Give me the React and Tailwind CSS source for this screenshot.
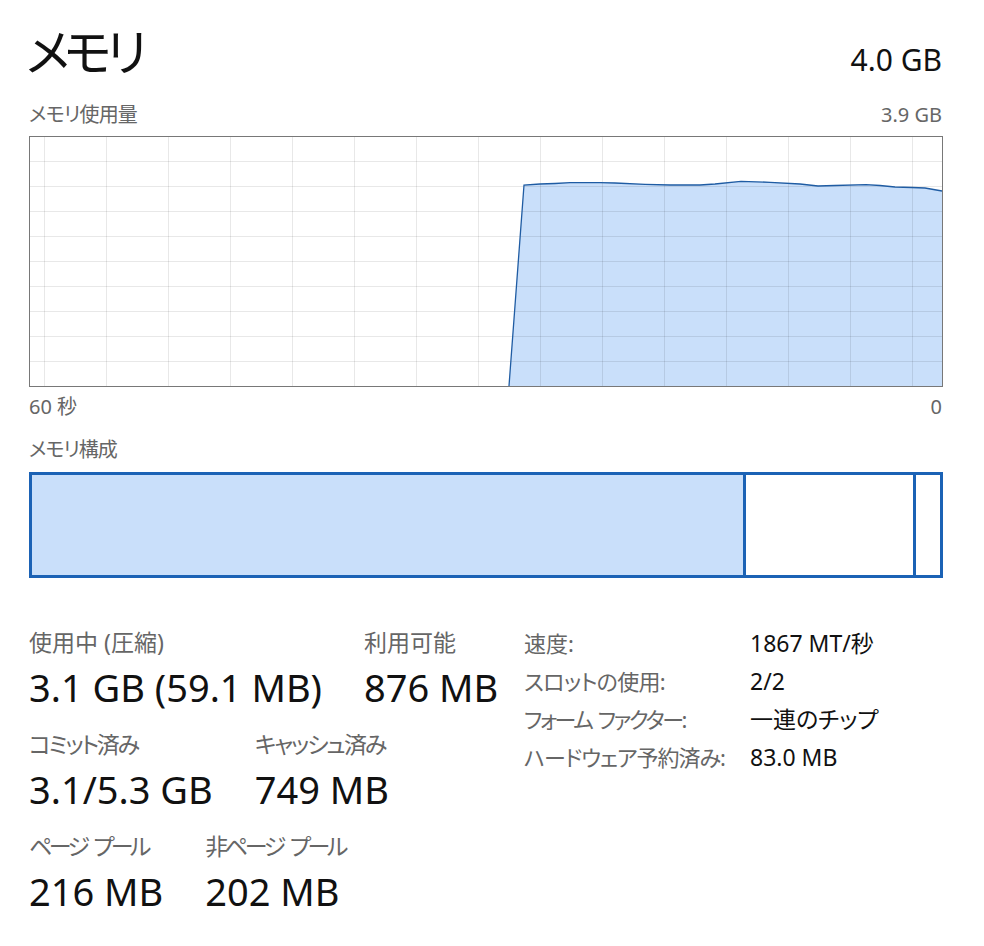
import React from "react";

const gridX = [15, 77, 139, 201, 263, 325, 387, 449, 511, 573, 635, 697, 759, 821, 883];
const gridY = [25, 50, 75, 100, 125, 150, 175, 200, 225];

const usage = [
  [480, 250], [495, 49], [511, 48], [526, 47.5], [541, 46.7], [571, 46.7], [586, 47],
  [616, 48.3], [641, 49], [671, 49], [686, 48], [712, 45.3], [741, 46.3], [771, 48],
  [789, 50], [806, 49.5], [837, 48.7], [851, 49.5], [866, 51], [883, 51.5], [896, 52], [913, 55],
];

const UsageGraph = () => {
  const line = usage.map((p) => p.join(",")).join(" ");
  const area = `${line} 913,250 480,250`;
  return (
    <svg width="914" height="251" viewBox="0 0 914 251" className="block">
      <rect x="0" y="0" width="914" height="251" fill="#ffffff" />
      <polygon points={area} fill="#c9dffa" />
      {gridX.map((x) => (
        <line key={"x" + x} x1={x + 0.5} y1="0" x2={x + 0.5} y2="251" stroke="rgba(0,0,0,0.09)" strokeWidth="1" />
      ))}
      {gridY.map((y) => (
        <line key={"y" + y} x1="0" y1={y + 0.5} x2="914" y2={y + 0.5} stroke="rgba(0,0,0,0.09)" strokeWidth="1" />
      ))}
      <polyline points={line} fill="none" stroke="#1f5ca3" strokeWidth="1.3" />
      <rect x="0.5" y="0.5" width="913" height="250" fill="none" stroke="#787878" strokeWidth="1" />
    </svg>
  );
};

const Gap = ({ w = "w-[7px]" }) => <span className={`inline-block ${w}`} />;

// kana in the original font run narrower, so some labels get tighter tracking
const Stat = ({ label, value, track = "" }) => (
  <div className="flex flex-col">
    <div className={`text-[23px] leading-[28px] text-[#666666] whitespace-nowrap ${track}`}>{label}</div>
    <div className="mt-[8px] text-[38px] leading-[46px] text-[#111111] whitespace-nowrap">{value}</div>
  </div>
);

const details = [
  ["speed", "速度:", "1867 MT/秒", ""],
  ["slots", "スロットの使用:", "2/2", "tracking-[-0.7px]"],
  ["form", <>フォーム<Gap w="w-[6px]" />ファクター:</>, "一連のチップ", "tracking-[-2.4px]"],
  ["hw", "ハードウェア予約済み:", "83.0 MB", "tracking-[-1px]"],
];

export default function App() {
  return (
    <div
      className="w-[984px] h-[946px] bg-white pl-[29px] [font-feature-settings:'palt']"
      style={{ fontFamily: '"Noto Sans", "Noto Sans CJK JP", sans-serif' }}
    >
      <div className="w-[914px] pt-[22px] flex justify-between items-baseline">
        <h1 className="text-[50px] leading-[60px] text-[#111111] -ml-[3px] tracking-[-5.5px]">メモリ</h1>
        <div className="text-[30px] leading-[36px] text-[#111111] pr-px">4.0 GB</div>
      </div>

      <div className="w-[914px] mt-[20px] flex justify-between items-baseline text-[20px] leading-[26px] text-[#666666]">
        <span className="tracking-[-0.8px]">メモリ使用量</span>
        <span className="pr-px">3.9 GB</span>
      </div>

      <div className="mt-[8px]">
        <UsageGraph />
      </div>

      <div className="w-[914px] mt-[7px] flex justify-between text-[20px] leading-[26px] text-[#666666]">
        <span>60 秒</span>
        <span className="pr-px">0</span>
      </div>

      <div className="mt-[17px] text-[20px] leading-[26px] text-[#666666] tracking-[-1px]">メモリ構成</div>

      <div className="mt-[9px] w-[914px] h-[106px] border-[3px] border-[#1b62b5] flex">
        <div className="w-[711px] bg-[#c9dffa]" />
        <div className="w-[3px] bg-[#1b62b5]" />
        <div className="w-[167px] bg-white" />
        <div className="w-[3px] bg-[#1b62b5]" />
        <div className="flex-1 bg-white" />
      </div>

      <div className="mt-[50px] flex items-start">
        <div className="w-[495px] flex flex-col gap-[20px]">
          <div className="flex gap-[42px]">
            <Stat label="使用中 (圧縮)" value="3.1 GB (59.1 MB)" />
            <Stat label="利用可能" value="876 MB" />
          </div>
          <div className="flex gap-[42px]">
            <Stat label="コミット済み" value="3.1/5.3 GB" track="tracking-[-2.2px]" />
            <Stat label="キャッシュ済み" value="749 MB" track="tracking-[-2px]" />
          </div>
          <div className="flex gap-[42px]">
            <Stat label={<>ページ<Gap />プール</>} value="216 MB" track="tracking-[-3.6px]" />
            <Stat label={<>非ページ<Gap />プール</>} value="202 MB" track="tracking-[-3.4px]" />
          </div>
        </div>

        <div className="-mt-[4px] grid grid-cols-[226px_auto] leading-[38px]">
          {details.map(([id, k, v, t]) => (
            <React.Fragment key={id}>
              <div className={`text-[22px] text-[#666666] whitespace-nowrap ${t}`}>{k}</div>
              <div className="text-[23px] text-[#111111] whitespace-nowrap">{v}</div>
            </React.Fragment>
          ))}
        </div>
      </div>
    </div>
  );
}
